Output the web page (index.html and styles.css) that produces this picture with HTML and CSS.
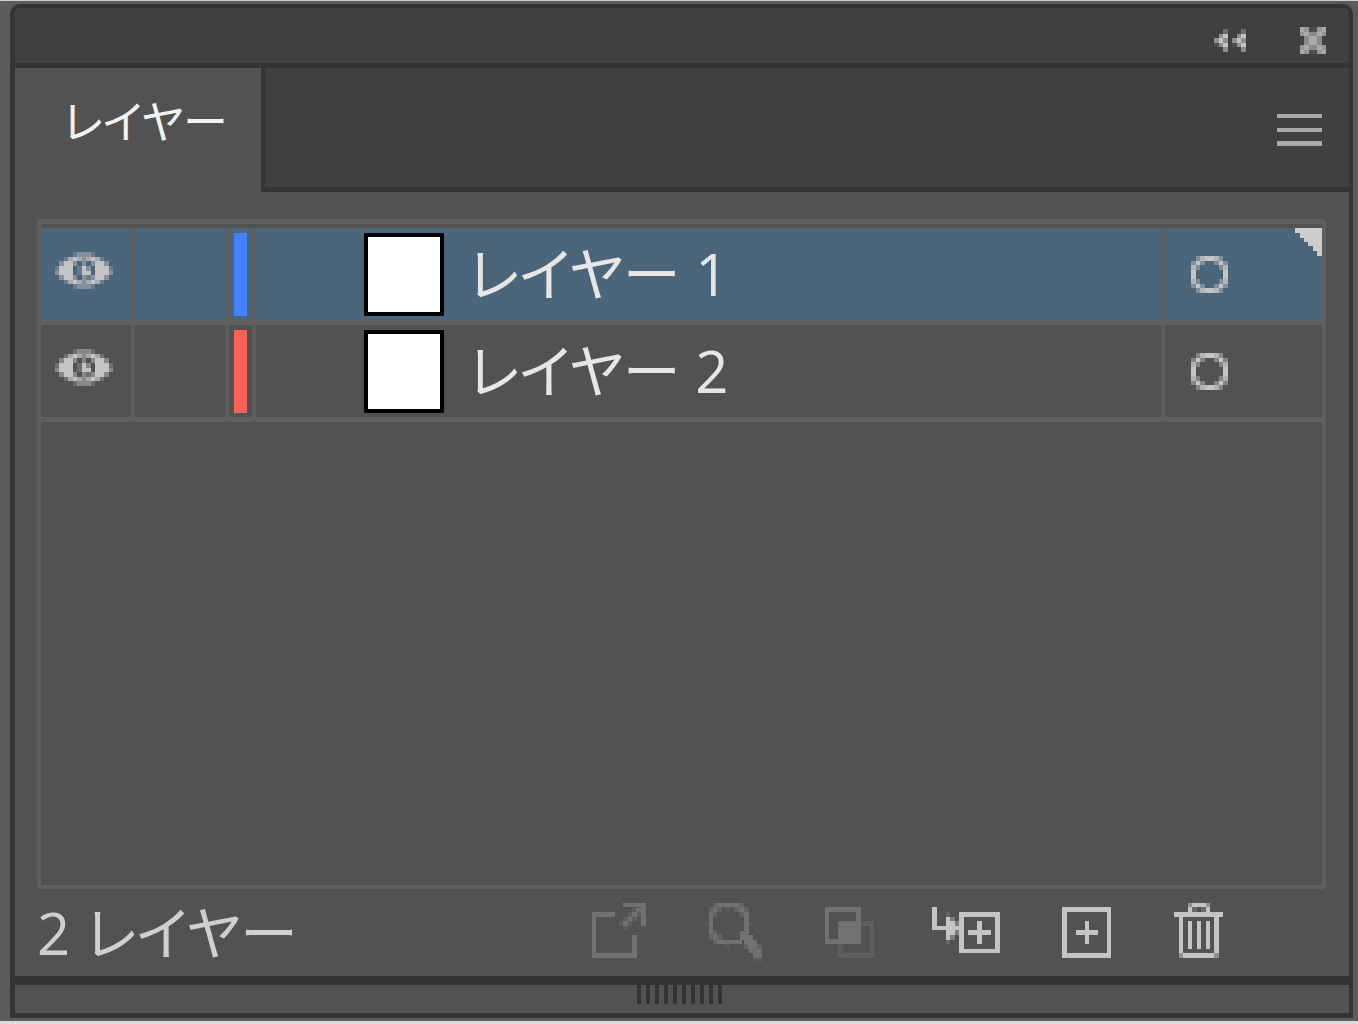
FILE: index.html
```html
<!DOCTYPE html>
<html lang="ja">

<head>
  <meta charset="UTF-8">
  <meta name="viewport" content="width=device-width, initial-scale=1.0">
  <title>レイヤー</title>
  <link rel="stylesheet" href="styles.css">
</head>

<body>

  <!-- 共通アイコン -->
  <svg class="sprite" aria-hidden="true">
    <symbol id="eye" viewBox="0 0 13 8" preserveAspectRatio="none">
      <path d="M4 1h1v1h-1zM8 1h1v1h-1zM2 2h2v1h-2zM9 2h2v1h-2zM1 3h3v2h-3zM9 3h3v2h-3zM6 3h1v1h-1zM6 4h2v1h-2zM2 5h2v1h-2zM9 5h2v1h-2zM4 6h1v1h-1zM8 6h1v1h-1z" />
      <path opacity=".75" d="M3 1h1v1h-1zM5 1h1v1h-1zM7 1h1v1h-1zM9 1h1v1h-1zM3 6h1v1h-1zM5 6h1v1h-1zM7 6h1v1h-1zM9 6h1v1h-1z" />
      <path opacity=".48" d="M5 0h3v1h-3zM6 1h1v2h-1zM1 2h1v1h-1zM4 2h1v1h-1zM8 2h1v1h-1zM11 2h1v1h-1zM7 3h1v1h-1zM0 4h1v1h-1zM12 4h1v1h-1zM1 5h1v1h-1zM4 5h1v1h-1zM6 5h1v2h-1zM8 5h1v1h-1zM11 5h1v1h-1zM5 7h3v1h-3z" />
      <path opacity=".25" d="M4 0h1v1h-1zM8 0h1v1h-1zM2 1h1v1h-1zM10 1h1v1h-1zM0 3h1v1h-1zM12 3h1v1h-1zM5 3h1v2h-1zM7 5h1v1h-1zM2 6h1v1h-1zM10 6h1v1h-1zM4 7h1v1h-1zM8 7h1v1h-1z" />
    </symbol>
    <symbol id="target" viewBox="0 0 8 8" preserveAspectRatio="none">
      <path d="M3 0h2v1h-2zM1 1h1v1h-1zM6 1h1v1h-1zM0 3h1v2h-1zM7 3h1v2h-1zM1 6h1v1h-1zM6 6h1v1h-1zM3 7h2v1h-2z" />
      <path opacity=".85" d="M2 0h1v1h-1zM5 0h1v1h-1zM0 2h1v1h-1zM7 2h1v1h-1zM0 5h1v1h-1zM7 5h1v1h-1zM2 7h1v1h-1zM5 7h1v1h-1z" />
      <path opacity=".45" d="M1 0h1v1h-1zM6 0h1v1h-1zM0 1h1v1h-1zM2 1h1v1h-1zM5 1h1v1h-1zM7 1h1v1h-1zM1 2h1v1h-1zM6 2h1v1h-1zM1 5h1v1h-1zM6 5h1v1h-1zM0 6h1v1h-1zM2 6h1v1h-1zM5 6h1v1h-1zM7 6h1v1h-1zM1 7h1v1h-1zM6 7h1v1h-1z" />
    </symbol>
  </svg>

  <main class="desktop">
    <section class="panel">

      <header class="titlebar">
        <button class="icon-btn" aria-label="折りたたむ">
          <svg class="icon-collapse" width="32" height="23" viewBox="0 0 7 5" preserveAspectRatio="none">
            <path d="M2 1h1v1h-1zM1 2h1v1h-1zM2 3h1v1h-1zM6 1h1v1h-1zM5 2h1v1h-1zM6 3h1v1h-1z" />
            <path opacity=".6" d="M1 1h1v1h-1zM0 2h1v1h-1zM2 2h1v1h-1zM1 3h1v1h-1zM2 4h1v1h-1zM5 1h1v1h-1zM4 2h1v1h-1zM6 2h1v1h-1zM5 3h1v1h-1zM6 4h1v1h-1z" />
            <path opacity=".35" d="M2 0h1v1h-1zM6 0h1v1h-1z" />
            <path opacity=".1" d="M0 3h1v1h-1zM4 3h1v1h-1z" />
          </svg>
        </button>
        <button class="icon-btn" aria-label="閉じる">
          <svg class="icon-close" width="26" height="27" viewBox="0 0 6 6" preserveAspectRatio="none">
            <path d="M0 0h1v1h-1zM5 0h1v1h-1zM1 1h1v1h-1zM4 1h1v1h-1zM2 2h2v2h-2zM1 4h1v1h-1zM4 4h1v1h-1zM0 5h1v1h-1zM5 5h1v1h-1z" />
            <path opacity=".8" d="M1 0h1v1h-1zM4 0h1v1h-1zM0 1h1v1h-1zM5 1h1v1h-1zM0 4h1v1h-1zM5 4h1v1h-1zM1 5h1v1h-1zM4 5h1v1h-1z" />
            <path opacity=".7" d="M2 1h2v1h-2zM1 2h1v2h-1zM4 2h1v2h-1zM2 4h2v1h-2z" />
            <path opacity=".12" d="M2 0h2v1h-2zM2 5h2v1h-2z" />
          </svg>
        </button>
      </header>

      <div class="tabbar">
        <button class="tab">レイヤー</button>
        <div class="tab-rest">
          <button class="icon-btn" aria-label="パネルメニュー">
            <svg class="icon-menu" width="45" height="32" viewBox="0 0 45 32">
              <path d="M0 0h45v4h-45zM0 14h45v4h-45zM0 27h45v5h-45z" />
            </svg>
          </button>
        </div>
      </div>

      <ul class="layers">
        <li class="layer selected">
          <button class="cell visibility" aria-label="表示"><svg width="58" height="37"><use href="#eye" /></svg></button>
          <button class="cell lock" aria-label="ロック"></button>
          <span class="cell color"><i class="bar blue"></i></span>
          <div class="cell name"><span class="thumb"></span><span>レイヤー 1</span></div>
          <button class="cell target" aria-label="ターゲット"><svg width="37" height="37"><use href="#target" /></svg></button>
          <svg class="corner" width="27" height="28" viewBox="0 0 27 28">
            <path d="M0 0H27V28H22V23H18V18H13V14H9V10H5V5H0z" />
          </svg>
        </li>
        <li class="layer">
          <button class="cell visibility" aria-label="表示"><svg width="58" height="37"><use href="#eye" /></svg></button>
          <button class="cell lock" aria-label="ロック"></button>
          <span class="cell color"><i class="bar red"></i></span>
          <div class="cell name"><span class="thumb"></span><span>レイヤー 2</span></div>
          <button class="cell target" aria-label="ターゲット"><svg width="37" height="37"><use href="#target" /></svg></button>
        </li>
      </ul>

      <footer class="footer">
        <span class="count">2 レイヤー</span>
        <div class="tools">
          <button class="icon-btn off" aria-label="書き出し">
            <svg width="76" height="60" viewBox="0 0 76 60">
              <path d="M11 9h23v5h-19v36h36v-18h5v23h-45zM42 0h23v23h-5v-19h-18z" />
              <path d="M42 18h5v5h-5zM47 14h4v4h-4zM51 9h5v5h-5zM55 5h5v4h-5z" />
              <path opacity=".4" d="M42 14h5v4h-5zM47 18h4v5h-4zM47 9h4v5h-4zM51 14h5v4h-5zM51 5h4v4h-4zM56 9h4v5h-4zM38 18h4v5h-4zM42 23h5v4h-5z" />
            </svg>
          </button>
          <button class="icon-btn off" aria-label="検索">
            <svg width="76" height="60" viewBox="0 0 76 60">
              <path d="M20 0h22v4h-22zM16 4h4v5h-4zM42 4h5v5h-5zM12 9h4v22h-4zM47 9h5v22h-5zM16 31h4v6h-4zM20 37h25v4h-25zM43 28h8v9h-8zM47 32h9v9h-9zM51 37h9v9h-9zM56 46h9v9h-9zM52 41h8v9h-8z" />
              <path opacity=".5" d="M16 0h4v4h-4zM42 0h5v4h-5zM12 4h4v5h-4zM20 4h5v5h-5zM37 4h5v5h-5zM47 4h5v5h-5zM16 9h4v5h-4zM42 9h5v5h-5zM12 31h4v6h-4zM16 37h4v4h-4zM20 31h5v6h-5zM16 27h4v4h-4zM60 41h5v5h-5zM47 41h5v5h-5z" />
              <path opacity=".2" d="M8 18h4v5h-4zM52 18h4v5h-4zM28 4h5v5h-5zM28 41h5v5h-5zM56 55h9v5h-9z" />
            </svg>
          </button>
          <button class="icon-btn off" aria-label="クリッピングマスクを作成">
            <svg width="76" height="60" viewBox="0 0 76 60">
              <path opacity=".4" d="M48 18h13v37h-36v-14h5v9h27v-27h-9z" />
              <path fill-rule="evenodd" d="M12 4h36v37h-36zM16 9v27h9v-18h18v-9z" />
            </svg>
          </button>
          <button class="icon-btn" aria-label="サブレイヤーを作成">
            <svg width="76" height="60" viewBox="0 0 76 60">
              <path d="M3 4h5v19h9v-9h4v4h5v5h4v4h-4v5h-5v5h-4v-10h-14z" />
              <path opacity=".4" d="M21 14h5v4h-5zM21 32h5v5h-5zM26 18h4v5h-4zM26 27h4v5h-4z" />
              <path opacity=".2" d="M17 9h4v5h-4zM17 37h4v4h-4z" />
              <path fill-rule="evenodd" d="M30 9h41v41h-41zM35 14v32h31v-32z" />
              <path d="M39 27h9v-9h5v9h9v5h-9v9h-5v-9h-9z" />
            </svg>
          </button>
          <button class="icon-btn" aria-label="レイヤーを作成">
            <svg width="76" height="60" viewBox="0 0 76 60">
              <path fill-rule="evenodd" d="M17 4h49v51h-49zM22 9v41h40v-41z" />
              <path d="M31 27h9v-9h4v9h9v5h-9v9h-4v-9h-9z" />
            </svg>
          </button>
          <button class="icon-btn" aria-label="削除">
            <svg width="76" height="60" viewBox="0 0 76 60">
              <path d="M31 0h14v4h-14zM27 4h4v5h-4zM45 4h4v5h-4zM13 9h49v5h-49zM18 14h4v36h31v-36h5v36h-5v5h-31v-5h-4z" />
              <path d="M27 18h4v28h-4zM36 18h4v28h-4zM45 18h4v28h-4z" />
              <path opacity=".55" d="M27 0h4v4h-4zM45 0h4v4h-4zM18 50h4v5h-4zM53 50h5v5h-5z" />
              <path opacity=".2" d="M31 4h5v5h-5zM40 4h5v5h-5z" />
            </svg>
          </button>
        </div>
      </footer>

      <div class="resize"><span class="grip"></span></div>

    </section>
  </main>

</body>

</html>
```
FILE: styles.css
```css
* {
  box-sizing: border-box;
}

body {
  margin: 0;
  font-family: "Open Sans", "Noto Sans CJK JP", sans-serif;
  font-size: 58px;
  font-feature-settings: "palt";
  line-height: 72px;
  color: #e6e6e6;
}

button {
  border: 0;
  padding: 0;
  margin: 0;
  background: none;
  color: inherit;
  font: inherit;
  font-feature-settings: inherit;
  cursor: pointer;
}

svg {
  display: block;
  fill: #c4c4c4;
  shape-rendering: crispEdges;
}

.sprite {
  position: absolute;
  width: 0;
  height: 0;
}

.desktop {
  display: flex;
  min-height: 100vh;
  padding: 3px 5px 3px 10px;
  border-top: 1px solid #d0d0d0;
  border-bottom: 3px solid #dcdcdc;
  background: #5b5b5b;
}

.panel {
  flex: 1;
  display: flex;
  flex-direction: column;
  border: 4px solid #343434;
  border-left-width: 5px;
  border-bottom-width: 5px;
  border-radius: 10px 10px 0 0;
  background: #525252;
}

.titlebar {
  display: flex;
  justify-content: flex-end;
  align-items: center;
  gap: 54px;
  height: 60px;
  padding-top: 9px;
  padding-right: 23px;
  border-bottom: 5px solid #343434;
  border-radius: 6px 6px 0 0;
  background: #404040;
}

.icon-close,
.icon-menu {
  fill: #aaa;
}

/* タブ */
.tabbar {
  display: flex;
  height: 124px;
}

.tab {
  width: 246px;
  padding: 0 0 16px 48px;
  font-size: 45px;
  text-align: left;
  color: #f2f2f2;
}

.tab-rest {
  flex: 1;
  display: flex;
  justify-content: flex-end;
  align-items: center;
  padding-right: 27px;
  padding-top: 4px;
  border-left: 4px solid #343434;
  border-bottom: 5px solid #343434;
  background: #404040;
}

/* レイヤー一覧 */
.layers {
  flex: 1;
  margin: 27px 23px 0 22px;
  padding: 4px 0 0;
  border: 4px solid #5f5f5f;
  border-top-width: 5px;
  border-radius: 3px;
  list-style: none;
}

.layer {
  position: relative;
  display: flex;
  height: 97px;
  border-bottom: 5px solid #5f5f5f;
}

.layer.selected {
  background: #4b657b;
}

.cell {
  display: flex;
  align-items: center;
  justify-content: center;
  border-right: 4px solid #5f5f5f;
}

.visibility {
  width: 94px;
  padding: 0 4px 8px 0;
}

.lock {
  width: 94px;
}

.color {
  width: 27px;
}

.bar {
  width: 13px;
  height: 83px;
}

.blue {
  background: #4480ff;
}

.red {
  background: #ff6058;
}

.name {
  flex: 1;
  justify-content: flex-start;
  gap: 24px;
  padding-left: 108px;
}

.thumb {
  width: 80px;
  height: 83px;
  border: 4px solid #000;
  background: #fff;
}

.target {
  width: 157px;
  justify-content: flex-start;
  padding-left: 26px;
  border-right: 0;
}

.corner {
  position: absolute;
  top: 0;
  right: 0;
  fill: #cdcdcd;
}

/* フッター */
.footer {
  display: flex;
  justify-content: space-between;
  align-items: center;
  height: 87px;
  padding: 0 112px 0 22px;
}

.count {
  color: #cfcfcf;
}

.tools {
  display: flex;
  gap: 40px;
}

.off svg {
  fill: #717171;
}

.resize {
  height: 37px;
  padding-right: 5px;
  border-top: 9px solid #343434;
}

.grip {
  display: block;
  width: 85px;
  height: 19px;
  margin: 0 auto;
  background: repeating-linear-gradient(90deg, #343434 0 4px, transparent 4px 9px);
}
```
